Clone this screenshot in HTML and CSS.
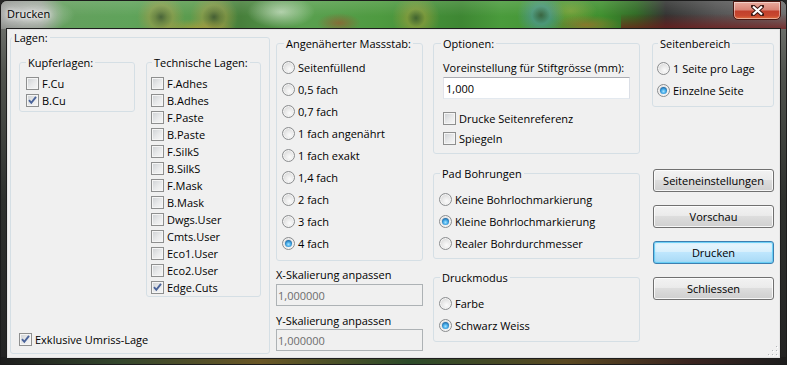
FILE: index.html
```html
<!DOCTYPE html>
<html lang="de">
<head>
<meta charset="utf-8">
<title>Drucken</title>
<link rel="stylesheet" href="styles.css">
</head>
<body>
<div class="window">
  <div class="titlebar">
    <span class="title">Drucken</span>
    <button class="close" aria-label="Schließen">
      <svg width="13" height="11" viewBox="0 0 13 11"><path d="M2 1.5 L11 9.5 M11 1.5 L2 9.5" stroke="#3b1713" stroke-width="4.2" stroke-linecap="round" fill="none"/><path d="M2 1.5 L11 9.5 M11 1.5 L2 9.5" stroke="#ffffff" stroke-width="2.3" fill="none"/></svg>
    </button>
  </div>
  <div class="client">
    <fieldset class="group lagen">
      <legend class="lg-lagen">Lagen:</legend>
      <div class="lagen-body">
        <div class="lagen-top">
          <fieldset class="group kupfer">
            <legend class="lg-kupfer">Kupferlagen:</legend>
            <div class="list kupfer-list">
              <label class="check"><span class="cb"></span>F.Cu</label>
              <label class="check"><span class="cb"><svg width="11" height="11" viewBox="0 0 11 11"><path d="M2 5.2 L4.3 7.8 L9 1.8" stroke="#4a639a" stroke-width="1.9" fill="none"/></svg></span>B.Cu</label>
            </div>
          </fieldset>
          <fieldset class="group tech">
            <legend class="lg-tech">Technische Lagen:</legend>
            <div class="list tech-list">
              <label class="check"><span class="cb"></span>F.Adhes</label>
              <label class="check"><span class="cb"></span>B.Adhes</label>
              <label class="check"><span class="cb"></span>F.Paste</label>
              <label class="check"><span class="cb"></span>B.Paste</label>
              <label class="check"><span class="cb"></span>F.SilkS</label>
              <label class="check"><span class="cb"></span>B.SilkS</label>
              <label class="check"><span class="cb"></span>F.Mask</label>
              <label class="check"><span class="cb"></span>B.Mask</label>
              <label class="check"><span class="cb"></span>Dwgs.User</label>
              <label class="check"><span class="cb"></span>Cmts.User</label>
              <label class="check"><span class="cb"></span>Eco1.User</label>
              <label class="check"><span class="cb"></span>Eco2.User</label>
              <label class="check"><span class="cb"><svg width="11" height="11" viewBox="0 0 11 11"><path d="M2 5.2 L4.3 7.8 L9 1.8" stroke="#4a639a" stroke-width="1.9" fill="none"/></svg></span>Edge.Cuts</label>
            </div>
          </fieldset>
        </div>
        <label class="check exkl"><span class="cb"><svg width="11" height="11" viewBox="0 0 11 11"><path d="M2 5.2 L4.3 7.8 L9 1.8" stroke="#4a639a" stroke-width="1.9" fill="none"/></svg></span>Exklusive Umriss-Lage</label>
      </div>
    </fieldset>

    <div class="col col2">
      <fieldset class="group scale">
        <legend class="lg-scale">Angenäherter Massstab:</legend>
        <div class="rlist scale-list">
          <label class="radio"><span class="rb"></span>Seitenfüllend</label>
          <label class="radio"><span class="rb"></span>0,5 fach</label>
          <label class="radio"><span class="rb"></span>0,7 fach</label>
          <label class="radio"><span class="rb"></span>1 fach angenährt</label>
          <label class="radio"><span class="rb"></span>1 fach exakt</label>
          <label class="radio"><span class="rb"></span>1,4 fach</label>
          <label class="radio"><span class="rb"></span>2 fach</label>
          <label class="radio"><span class="rb"></span>3 fach</label>
          <label class="radio"><span class="rb on"></span>4 fach</label>
        </div>
      </fieldset>
      <div class="flabel xlabel">X-Skalierung anpassen</div>
      <input class="field small" type="text" value="1,000000" disabled>
      <div class="flabel ylabel">Y-Skalierung anpassen</div>
      <input class="field small yfield" type="text" value="1,000000" disabled>
    </div>

    <div class="col col3">
      <fieldset class="group opts">
        <legend class="lg-opts">Optionen:</legend>
        <div class="opts-body">
          <div class="flabel">Voreinstellung für Stiftgrösse (mm):</div>
          <input class="field pen" type="text" value="1,000">
          <div class="opt-checks">
            <label class="check row20"><span class="cb"></span>Drucke Seitenreferenz</label>
            <label class="check row20"><span class="cb"></span>Spiegeln</label>
          </div>
        </div>
      </fieldset>
      <fieldset class="group pad">
        <legend class="lg-pad">Pad Bohrungen</legend>
        <div class="rlist pad-list">
          <label class="radio"><span class="rb"></span>Keine Bohrlochmarkierung</label>
          <label class="radio"><span class="rb on"></span>Kleine Bohrlochmarkierung</label>
          <label class="radio"><span class="rb"></span>Realer Bohrdurchmesser</label>
        </div>
      </fieldset>
      <fieldset class="group mode">
        <legend class="lg-pad">Druckmodus</legend>
        <div class="rlist mode-list">
          <label class="radio"><span class="rb"></span>Farbe</label>
          <label class="radio"><span class="rb on"></span>Schwarz Weiss</label>
        </div>
      </fieldset>
    </div>

    <div class="col col4">
      <fieldset class="group range">
        <legend class="lg-range">Seitenbereich</legend>
        <div class="rlist range-list">
          <label class="radio"><span class="rb"></span>1 Seite pro Lage</label>
          <label class="radio"><span class="rb on"></span>Einzelne Seite</label>
        </div>
      </fieldset>
      <button class="btn first">Seiteneinstellungen</button>
      <button class="btn">Vorschau</button>
      <button class="btn default">Drucken</button>
      <button class="btn">Schliessen</button>
    </div>

    <svg class="grip" width="10" height="10" viewBox="0 0 10 10">
      <g fill="#ffffff"><rect x="9" y="1" width="1" height="1"/><rect x="9" y="5" width="1" height="1"/><rect x="5" y="5" width="1" height="1"/><rect x="9" y="9" width="1" height="1"/><rect x="5" y="9" width="1" height="1"/><rect x="1" y="9" width="1" height="1"/></g>
      <g fill="#b4b7ba"><rect x="8" y="0" width="1" height="1"/><rect x="8" y="4" width="1" height="1"/><rect x="4" y="4" width="1" height="1"/><rect x="8" y="8" width="1" height="1"/><rect x="4" y="8" width="1" height="1"/><rect x="0" y="8" width="1" height="1"/></g>
    </svg>
  </div>
</div>
</body>
</html>
```

FILE: styles.css
```css
* { box-sizing: border-box; }
html, body { margin: 0; padding: 0; }
body {
  width: 787px;
  height: 365px;
  overflow: hidden;
  font-family: "Open Sans", "Noto Sans", sans-serif;
  font-size: 11px;
  color: #000;
  background: #262626;
}

.window {
  width: 787px;
  height: 365px;
  display: flex;
  flex-direction: column;
  border: 1px solid #1b1b1b;
  border-radius: 7px 7px 0 0;
  overflow: hidden;
  background:
    linear-gradient(90deg, #1d1d1d 0, #34472d 15%, #6a5726 33%, #2d4b2a 52%, #5a4922 72%, #3a2420 88%, #1d1d1d 100%) left bottom / 100% 7px no-repeat,
    linear-gradient(180deg, #7c7e7a 0, #50534e 20%, #2e302d 55%, #232323 100%);
}

.titlebar {
  height: 28px;
  flex: none;
  display: flex;
  justify-content: space-between;
  align-items: flex-start;
  padding-left: 6px;
  background:
    linear-gradient(180deg, rgba(255,255,255,0.12), rgba(255,255,255,0) 55%),
    radial-gradient(ellipse 46px 17px at 28px 14px, rgba(228,228,228,0.75), rgba(228,228,228,0)),
    radial-gradient(circle at 160px 16px, rgba(60,62,40,0.6) 0, rgba(120,115,55,0.55) 6px, rgba(175,155,70,0.45) 12px, rgba(175,155,70,0) 24px),
    radial-gradient(circle at 213px 16px, rgba(60,62,40,0.6) 0, rgba(120,115,55,0.55) 6px, rgba(175,155,70,0.45) 12px, rgba(175,155,70,0) 24px),
    radial-gradient(circle at 415px 17px, rgba(60,62,40,0.55) 0, rgba(170,160,60,0.5) 9px, rgba(170,160,60,0) 24px),
    radial-gradient(circle at 540px 14px, rgba(45,60,70,0.55) 0, rgba(80,150,185,0.5) 9px, rgba(80,150,185,0) 24px),
    radial-gradient(ellipse 34px 16px at 280px 11px, rgba(215,232,210,0.7), rgba(215,232,210,0)),
    radial-gradient(ellipse 22px 10px at 338px 22px, rgba(190,50,35,0.45), rgba(190,50,35,0)),
    radial-gradient(ellipse 40px 9px at 195px 27px, rgba(210,160,45,0.5), rgba(210,160,45,0)),
    radial-gradient(ellipse 36px 10px at 585px 24px, rgba(205,95,40,0.5), rgba(205,95,40,0)),
    radial-gradient(ellipse 26px 14px at 570px 10px, rgba(195,180,65,0.4), rgba(195,180,65,0)),
    linear-gradient(180deg, rgba(120,22,22,0) 45%, rgba(120,22,22,0.7)) 620px 0 / 167px 100% no-repeat,
    linear-gradient(90deg, #8d8f8c 0, #8f9a8c 40px, #64a05e 62px, #5fa35a 130px, #5a9a4c 200px, #477f3b 240px, #5aa050 300px, #4e9a40 380px, #3e8733 460px, #4a9b3c 500px, #3f8f2e 600px, #2f6a24 635px, #323332 665px, #525252 715px, #6f6f6f 787px);
}

.title {
  padding-top: 5px;
  line-height: 15px;
  text-shadow: 0 0 4px #fff, 0 0 8px rgba(255,255,255,0.9), 0 0 12px rgba(255,255,255,0.7);
}

.close {
  width: 48px;
  height: 19px;
  margin: 0 5px 0 0;
  padding: 0;
  border: 1px solid #4a1711;
  border-radius: 0 0 5px 5px;
  background: linear-gradient(180deg, #e9ab9e 0%, #d98577 45%, #c2402c 55%, #c8472f 80%, #df6f3f 100%);
  box-shadow: inset 0 0 0 1px rgba(255,255,255,0.45);
  display: flex;
  align-items: center;
  justify-content: center;
}
.close svg { display: block; }

.client {
  flex: none;
  height: 329px;
  margin: 0 6px;
  border: 1px solid #e4e4e4;
  box-shadow: 0 0 0 1px #1e1e1e;
  background: #f0f0f0;
  display: flex;
  align-items: flex-start;
  padding: 0 5px 0 1px;
  position: relative;
}

.group {
  margin: 0;
  padding: 0;
  border: 1px solid #d5dfe5;
  border-radius: 3px;
  min-width: 0;
}
.group > legend {
  padding: 0 2px;
  line-height: 15px;
}

.lg-lagen { margin-left: 1px; }
.lg-kupfer { margin-left: 6px; }
.lg-tech { margin-left: 5px; }
.lg-scale { margin-left: 7px; }
.lg-opts { margin-left: 7px; }
.lg-pad { margin-left: 6px; }
.lg-range { margin-left: 5px; }

.lagen {
  width: 260px;
  height: 324px;
  margin-left: 1px;
  flex: none;
}
.lagen-body {
  height: 308px;
  display: flex;
  flex-direction: column;
  padding: 10px 8px 5px 8px;
}
.lagen-top {
  display: flex;
  align-items: flex-start;
  gap: 11px;
}
.kupfer { width: 116px; }
.tech { width: 115px; }
.list { display: flex; flex-direction: column; }
.kupfer-list { padding: 5px 0 2px 6px; }
.tech-list { padding: 5px 0 0 4px; }
.exkl { margin-top: auto; }

.check {
  display: flex;
  align-items: center;
  height: 17px;
  white-space: nowrap;
}
.check.row20 { height: 20px; }
.cb {
  width: 13px;
  height: 13px;
  flex: none;
  margin-right: 3px;
  border: 1px solid #8e8f8f;
  background: linear-gradient(135deg, #cdd0d3 0%, #e9eaeb 55%, #f7f7f7 100%);
  box-shadow: inset 0 0 0 1px #f5f5f5;
}
.cb svg { display: block; }

.radio {
  display: flex;
  align-items: center;
  height: 22px;
  white-space: nowrap;
}
.rb {
  position: relative;
  width: 13px;
  height: 13px;
  flex: none;
  margin-right: 3px;
  border-radius: 50%;
  border: 1px solid #8b8d8f;
  background: radial-gradient(circle at 60% 65%, #fbfbfb 0, #e8e8e8 45%, #cbcbcb 100%);
  box-shadow: inset 0 0 0 1px #f4f4f4;
}
.rb.on::after {
  content: "";
  position: absolute;
  left: 2px;
  top: 2px;
  width: 7px;
  height: 7px;
  border-radius: 50%;
  background: radial-gradient(circle at 50% 62%, #a9e6ff 0, #43a8e6 40%, #1b5f99 80%, #163f68 100%);
}

.col {
  display: flex;
  flex-direction: column;
  padding-top: 6px;
  flex: none;
}
.col2 { width: 147px; margin-left: 6px; }
.col3 { width: 207px; margin-left: 10px; }
.col4 { width: 122px; margin-left: 12px; }

.rlist { display: flex; flex-direction: column; }
.scale-list { padding: 5px 0 6px 5px; }
.pad-list { padding: 7px 0 4px 5px; }
.mode-list { padding: 7px 0 5px 5px; }
.range-list { padding: 6px 0 5px 4px; }

.flabel { line-height: 15px; white-space: nowrap; }
.xlabel { margin-top: 6px; }
.ylabel { margin-top: 7px; }

.field {
  display: block;
  height: 22px;
  margin: 2px 0 0 0;
  padding: 0 2px;
  font: inherit;
  color: #000;
  background: #fff;
  border: 1px solid #abadb3;
  border-color: #abadb3 #dbdfe6 #e3e9ef #e2e3ea;
  border-radius: 0;
  outline: none;
}
.field.small { width: 147px; }
.field.yfield { margin-top: 1px; }
.field:disabled {
  background: #f0f0f0;
  border-color: #adb2b5;
  color: #6d6d6d;
  padding-left: 1px;
}

.opts-body { padding: 9px 9px 5px 9px; }
.field.pen { width: 187px; }
.opt-checks { margin-top: 9px; }

.pad { margin-top: 12px; }
.mode { margin-top: 11px; }

.btn {
  display: block;
  width: 121px;
  height: 23px;
  margin: 13px 0 0 1px;
  padding: 0;
  font: inherit;
  color: #000;
  border: 1px solid #707070;
  border-radius: 3px;
  background: linear-gradient(180deg, #f2f2f2 0%, #ebebeb 45%, #dddddd 50%, #cfcfcf 100%);
  box-shadow: inset 0 0 0 1px rgba(255,255,255,0.8);
}
.btn.first { margin-top: 62px; }
.btn.default {
  border-color: #3c7fb1;
  background: linear-gradient(180deg, #eaf6fd 0%, #d9f0fc 45%, #bee6fd 50%, #a7d9f5 100%);
  box-shadow: inset 0 0 0 1px rgba(96,204,245,0.85), inset 0 0 3px rgba(80,190,240,0.6);
}

.grip {
  position: absolute;
  right: 1px;
  bottom: 1px;
  display: block;
}
```
